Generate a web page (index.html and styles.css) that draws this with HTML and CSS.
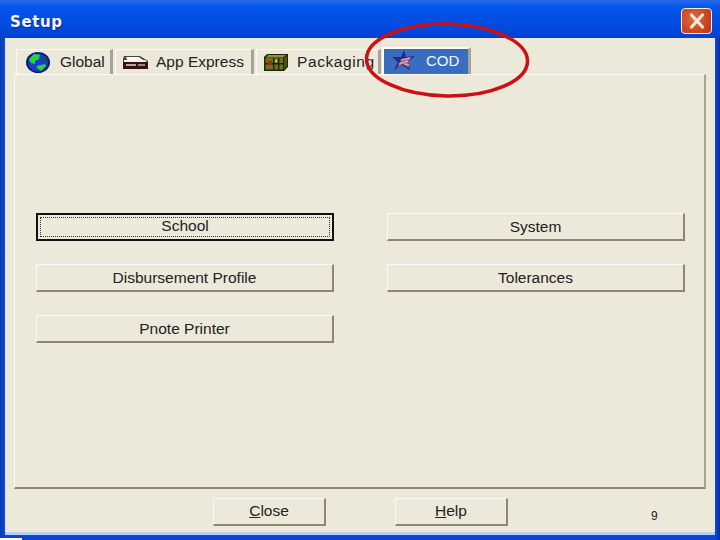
FILE: index.html
```html
<!DOCTYPE html>
<html>
<head>
<meta charset="utf-8">
<title>Setup</title>
<link rel="stylesheet" href="styles.css">
</head>
<body>
<div class="window">
  <div class="titlebar">
    <span class="title">Setup</span>
    <div class="close-x">
      <svg width="24" height="20" viewBox="0 0 24 20"><path d="M6.500 4 L17.500 16 M17.500 4 L6.500 16" stroke="#f6e6d8" stroke-width="3.200" stroke-linecap="round"/></svg>
    </div>
  </div>
  <div class="client">
    <div class="tabs">
      <div class="tab tab-global">
        <svg class="ico" width="24" height="21" viewBox="0 0 24 21"><ellipse cx="12" cy="10.500" rx="12" ry="10.500" fill="#101c70"/><ellipse cx="12" cy="10.500" rx="10" ry="9" fill="#1c3cd0"/><path d="M3 7 L8 2 L14 3 L13 7 L9 9 L9 12 L5 11 Z" fill="#22d838"/><path d="M11 14 L19 12 L20 14 L15 19 L11 16 Z" fill="#22d838"/><path d="M16 5 L21 7 L19 10 L16 9 Z" fill="#0e5a4c"/></svg>
        <span>Global</span>
      </div>
      <div class="tab tab-app">
        <svg class="ico" width="26" height="14" viewBox="0 0 26 14"><path d="M1 1 H17 L25 6 V8 H0 V4 Z" fill="#4a403c"/><path d="M3 2 H16 L20 5 H4 Z" fill="#fbf8f4"/><path d="M1 5 H22 L24 7 H1 Z" fill="#f4f0ea"/><rect x="0" y="7" width="25" height="7" fill="#3a1018"/><rect x="3" y="9" width="10" height="2" fill="#b8a8a0"/><rect x="15" y="9" width="7" height="2" fill="#9c8880"/></svg>
        <span>App Express</span>
      </div>
      <div class="tab tab-pack">
        <svg class="ico" width="24" height="17" viewBox="0 0 24 17"><path d="M3 0 H24 V13 L20 17 H0 V3 Z" fill="#24220a"/><path d="M4 1 H22 L19 3.500 H2 Z" fill="#8e9238"/><rect x="1.500" y="4" width="17.500" height="11.500" fill="#6c7224"/><path d="M20 4 L23 1.500 V12 L20 15 Z" fill="#4e5418"/><rect x="9" y="4" width="1.500" height="11.500" fill="#24220a"/><rect x="14" y="4" width="1.500" height="11.500" fill="#24220a"/><rect x="1.500" y="9" width="17.500" height="1.500" fill="#24220a"/><rect x="4" y="7" width="4" height="4" fill="#a82a18"/><rect x="11" y="6" width="2" height="2" fill="#d0d080"/></svg>
        <span>Packaging</span>
      </div>
      <div class="tab tab-cod">
        <svg class="ico" width="23" height="20" viewBox="0 0 23 20"><path d="M12 0 L14 7 L23 6 L16 12 L18 20 L10 15 L2 20 L6 12 L0 7 L9 7 Z" fill="#1c2c88"/><path d="M9 10 L20 7 L16 12 L17 18 L11 14 L5 18 Z" fill="#a05a90"/><path d="M9 10 L18 8 M7 14 L16 11 M12 14 L17 15" stroke="#e0a0a8" stroke-width="1.500"/></svg>
        <span>COD</span>
      </div>
    </div>
    <div class="panel">
      <button class="btn btn-focus"><span class="focus-ring">School</span></button>
      <button class="btn">System</button>
      <button class="btn">Disbursement Profile</button>
      <button class="btn">Tolerances</button>
      <button class="btn">Pnote Printer</button>
    </div>
    <div class="footer">
      <button class="btn btn-foot btn-close"><u>C</u>lose</button>
      <button class="btn btn-foot btn-help"><u>H</u>elp</button>
      <span class="page-num">9</span>
    </div>
  </div>
  <div class="corner"></div>
  <svg class="ring" width="180" height="84" viewBox="0 0 180 84"><ellipse cx="90" cy="42" rx="80.500" ry="36" fill="none" stroke="#cc1014" stroke-width="3.500" transform="rotate(1 90 42)"/></svg>
</div>
</body>
</html>
```

FILE: styles.css
```css
* { box-sizing: border-box; }
html, body { margin: 0; padding: 0; }
body { width: 720px; height: 540px; overflow: hidden; background: #fff; }
.window {
  position: relative;
  width: 720px;
  height: 540px;
  display: flex;
  flex-direction: column;
  background: linear-gradient(90deg, #0a3aa8 0, #0a44d8 3px, #0a44d8 716px, #0a2e90 720px);
  padding: 0 5px 5px 5px;
  font-family: "Liberation Sans", Arial, sans-serif;
  font-size: 15px;
  color: #222;
}
.titlebar {
  height: 38px;
  margin: 0 -5px;
  padding: 0 8px 0 10px;
  display: flex;
  align-items: flex-start;
  justify-content: space-between;
  background: linear-gradient(#2a68e8 0, #0558ee 6px, #0350e4 16px, #0348dc 30px, #0340d0 38px);
}
.title {
  margin-top: 13px;
  color: #f4f6ff;
  font-family: "DejaVu Sans", sans-serif;
  font-weight: 700;
  font-size: 15px;
  line-height: 18px;
  letter-spacing: .6px;
  text-shadow: 1px 1px 1px #0a2a8a;
}
.close-x {
  width: 31px;
  height: 26px;
  margin-top: 8px;
  display: flex;
  align-items: center;
  justify-content: center;
  border: 1px solid #f2f0f0;
  border-radius: 4px;
  background: radial-gradient(circle at 40% 40%, #dc6a40, #c8401c 70%, #b83418);
}
.client {
  flex: 1;
  background: #ece8da;
  display: flex;
  flex-direction: column;
  padding: 9px 9px 0 9px;
  box-shadow: inset 0 -3px 0 #b4d0f0;
}
.tabs { display: flex; align-items: flex-end; height: 27px; gap: 2px; padding-left: 2px; }
.tab {
  height: 25px;
  display: flex;
  align-items: center;
  background: #ece8da;
  border-top: 1px solid #fbfaf6;
  border-left: 1px solid #fbfaf6;
  border-right: 3px solid #a8a494;
  font-size: 15.500px;
  white-space: nowrap;
}
.tab-global { width: 97px; padding-left: 9px; }
.tab-app { width: 139px; padding-left: 7px; }
.tab-pack { width: 125px; padding-left: 7px; letter-spacing: .6px; }
.tab-cod {
  width: 89px;
  height: 27px;
  margin-left: -1px;
  padding: 0 0 3px 8px;
  background: #3a6cc0;
  color: #f4f8ff;
  border-top: 2px solid #fbfaf6;
  border-left: 2px solid #fbfaf6;
  font-size: 15px;
}
.tab-global .ico { margin-right: 10px; }
.tab-app .ico { margin-right: 7px; }
.tab-pack .ico { margin-right: 9px; }
.tab-cod .ico { margin-right: 11px; }
.panel {
  height: 415px;
  padding: 138px 21px 0 21px;
  display: grid;
  grid-template-columns: 298px 298px;
  grid-auto-rows: 28px;
  column-gap: 53px;
  row-gap: 23px;
  border-top: 1px solid #fbfaf6;
  border-left: 1px solid #fbfaf6;
  border-right: 2px solid #a8a494;
  border-bottom: 2px solid #8c8874;
  background: #ece8da;
}
.btn {
  padding: 0;
  margin: 0;
  font: inherit;
  font-size: 15.500px;
  color: #222;
  background: #ece8da;
  border-style: solid;
  border-width: 1px 2px 2px 1px;
  border-color: #fbfaf6 #8c8874 #8c8874 #fbfaf6;
}
.btn-focus {
  border: 2px solid #111;
  padding: 2px;
  display: flex;
}
.focus-ring {
  flex: 1;
  display: flex;
  align-items: center;
  justify-content: center;
  padding-bottom: 2px;
  border: 1px dotted #333;
}
.footer {
  position: relative;
  flex: 1;
  display: flex;
  align-items: flex-start;
  padding: 9px 0 0 199px;
  gap: 69px;
}
.btn-foot { height: 28px; width: 113px; padding-bottom: 2px; }
.page-num {
  position: absolute;
  left: 637px;
  top: 19px;
  font-size: 12px;
  line-height: 16px;
}
.corner { position: absolute; left: 0; bottom: 0; width: 22px; height: 2px; background: #fff; }
.ring { position: absolute; left: 357px; top: 18px; pointer-events: none; }
```
